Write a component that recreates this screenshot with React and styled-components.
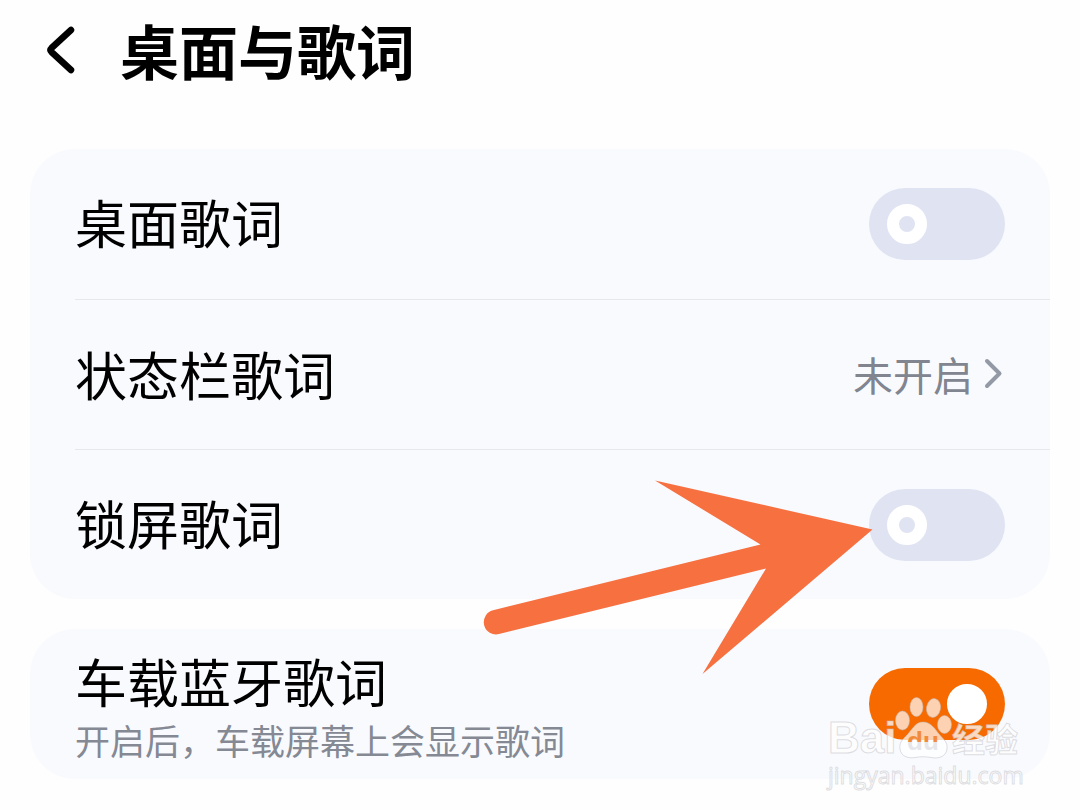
import React, { useState } from "react";
import styled, { createGlobalStyle } from "styled-components";

const GlobalStyle = createGlobalStyle`
  *, *::before, *::after { box-sizing: border-box; }
  body {
    margin: 0;
    background: #fefefe;
    color: #000;
    font-family: "Noto Sans CJK SC", "Noto Sans", sans-serif;
  }
`;

const Page = styled.main`
  display: flex;
  flex-direction: column;
  padding: 0 30px 32px;
`;

const Header = styled.header`
  display: flex;
  align-items: center;
  gap: 40px;
  height: 100px;
  margin-bottom: 49px;
  padding-left: 12px;
`;

const BackButton = styled.button`
  display: flex;
  padding: 0;
  border: 0;
  background: none;
  color: inherit;
  cursor: pointer;
`;

const Title = styled.h1`
  margin: 0;
  font-size: 59px;
  line-height: 80px;
  font-weight: 700;
`;

const Sections = styled.div`
  display: flex;
  flex-direction: column;
  gap: 30px;
`;

const Card = styled.section`
  position: relative;
  padding-left: 45px;
  border-radius: 45px;
  background: #f9fafe;
`;

const Row = styled.div`
  position: relative;
  display: flex;
  align-items: center;
  justify-content: space-between;
  min-height: 150px;
  padding-right: 45px;

  & + & {
    border-top: 1px solid #e6e8ec;
  }
`;

const RowText = styled.div`
  display: flex;
  flex-direction: column;
  padding-top: 6px;
`;

const Label = styled.label`
  padding-bottom: 4px;
  font-size: 52px;
  line-height: 62px;
`;

const Description = styled.p`
  margin: 0;
  color: #858993;
  font-size: 35px;
  line-height: 48px;
`;

const LinkRow = styled.a`
  display: flex;
  flex: 1;
  align-items: center;
  justify-content: space-between;
  padding-bottom: 2px;
  color: inherit;
  font-size: 52px;
  line-height: 64px;
  text-decoration: none;
`;

const Value = styled.span`
  display: flex;
  align-items: center;
  gap: 8px;
  color: #80858f;
  font-size: 40px;
  line-height: 64px;
`;

const Switch = styled.input`
  appearance: none;
  display: flex;
  align-items: center;
  flex: none;
  width: 136px;
  height: 72px;
  margin: 0;
  padding: 0 18px;
  border-radius: 36px;
  background: #e0e3f2;
  cursor: pointer;

  &::before {
    content: "";
    width: 40px;
    height: 40px;
    border: 12px solid #fff;
    border-radius: 50%;
  }

  &:checked {
    justify-content: flex-end;
    background: #f66a00;
  }

  &:checked::before {
    background: #fff;
  }
`;

const Pointer = styled.svg`
  position: absolute;
  top: 26px;
  right: 170px;
  z-index: 1;
  pointer-events: none;
`;

const Watermark = styled.div`
  position: absolute;
  right: 28px;
  bottom: -6px;
  width: 194px;
  color: rgba(255, 255, 255, 0.75);
  pointer-events: none;
  -webkit-text-stroke: 1px rgba(190, 190, 196, 0.5);
`;

const Brand = styled.div`
  display: flex;
  align-items: flex-end;
  height: 64px;
  margin-bottom: 5px;
`;

const Latin = styled.span`
  width: 66px;
  font: 700 44px/44px "Liberation Sans", sans-serif;
`;

const Han = styled.span`
  font-size: 33px;
  font-weight: 700;
  line-height: 44px;
`;

const Site = styled.div`
  font: 23px/20px "Open Sans", sans-serif;
`;

function Toggle({ id, initial = false }) {
  const [on, setOn] = useState(initial);
  return (
    <Switch
      id={id}
      type="checkbox"
      role="switch"
      checked={on}
      onChange={(e) => setOn(e.target.checked)}
    />
  );
}

function Arrow() {
  return (
    <Pointer width="400" height="204" viewBox="480 476 400 204" fill="#f67040" aria-hidden="true">
      <path d="M655 480.500 L872.500 529.500 L702.500 674 L766 568.500 L499 634 A12.200 12.200 0 0 1 493 610.300 L760.500 544.500 Z" />
    </Pointer>
  );
}

function Paw() {
  return (
    <svg width="58" height="64" viewBox="893 694 58 64" aria-hidden="true">
      <defs>
        <linearGradient id="duFill" gradientUnits="userSpaceOnUse" x1="0" y1="730" x2="0" y2="750">
          <stop offset="0.5" stopColor="#f28a3c" />
          <stop offset="0.5" stopColor="#e6e6ea" />
        </linearGradient>
      </defs>
      <g fill="#fff" fillOpacity="0.7" stroke="#bebec4" strokeOpacity="0.5">
        <ellipse cx="901.500" cy="718.500" rx="7" ry="9.500" />
        <ellipse cx="915.500" cy="705" rx="6.500" ry="9.500" />
        <ellipse cx="932.500" cy="706" rx="7" ry="9.500" transform="rotate(10 932.500 706)" />
        <ellipse cx="943.500" cy="722.500" rx="7" ry="9" />
        <path d="M922 720 C914 720 911 728 906 733 C901 738 898 741 899 747 C900 755 908 756.500 914 755.500 C920 754.500 924 754.500 930 755.500 C937 757 945 755 946 747 C947 740 942 737 938 732 C934 727 930 720 922 720 Z" />
      </g>
      <text
        x="906"
        y="748"
        fontFamily="Liberation Sans, sans-serif"
        fontSize="26"
        fontWeight="700"
        fill="url(#duFill)"
      >
        du
      </text>
    </svg>
  );
}

export default function App() {
  return (
    <>
      <GlobalStyle />
      <Page>
        <Header>
          <BackButton type="button" aria-label="返回">
            <svg width="38" height="56" viewBox="42 22 38 56" fill="none" stroke="currentColor" strokeWidth="6.500" strokeLinecap="round" strokeLinejoin="round">
              <path d="M71 30 L51.500 48 Q49.500 50 51.500 52 L71 70" />
            </svg>
          </BackButton>
          <Title>桌面与歌词</Title>
        </Header>

        <Sections>
          <Card>
            <Row>
              <Label htmlFor="desktop">桌面歌词</Label>
              <Toggle id="desktop" />
            </Row>
            <Row>
              <LinkRow href="#status-bar">
                状态栏歌词
                <Value>
                  未开启
                  <svg width="24" height="36" viewBox="980 356 24 36" fill="none" stroke="#939aa6" strokeWidth="4" strokeLinecap="round" strokeLinejoin="round" aria-hidden="true">
                    <path d="M986 361 L998.500 373.500 L986 386" />
                  </svg>
                </Value>
              </LinkRow>
            </Row>
            <Row>
              <Label htmlFor="lock">锁屏歌词</Label>
              <Toggle id="lock" />
              <Arrow />
            </Row>
          </Card>

          <Card>
            <Row>
              <RowText>
                <Label htmlFor="bluetooth">车载蓝牙歌词</Label>
                <Description>开启后，车载屏幕上会显示歌词</Description>
              </RowText>
              <Toggle id="bluetooth" initial />
            </Row>
            <Watermark>
              <Brand>
                <Latin>Bai</Latin>
                <Paw />
                <Han>经验</Han>
              </Brand>
              <Site>jingyan.baidu.com</Site>
            </Watermark>
          </Card>
        </Sections>
      </Page>
    </>
  );
}
